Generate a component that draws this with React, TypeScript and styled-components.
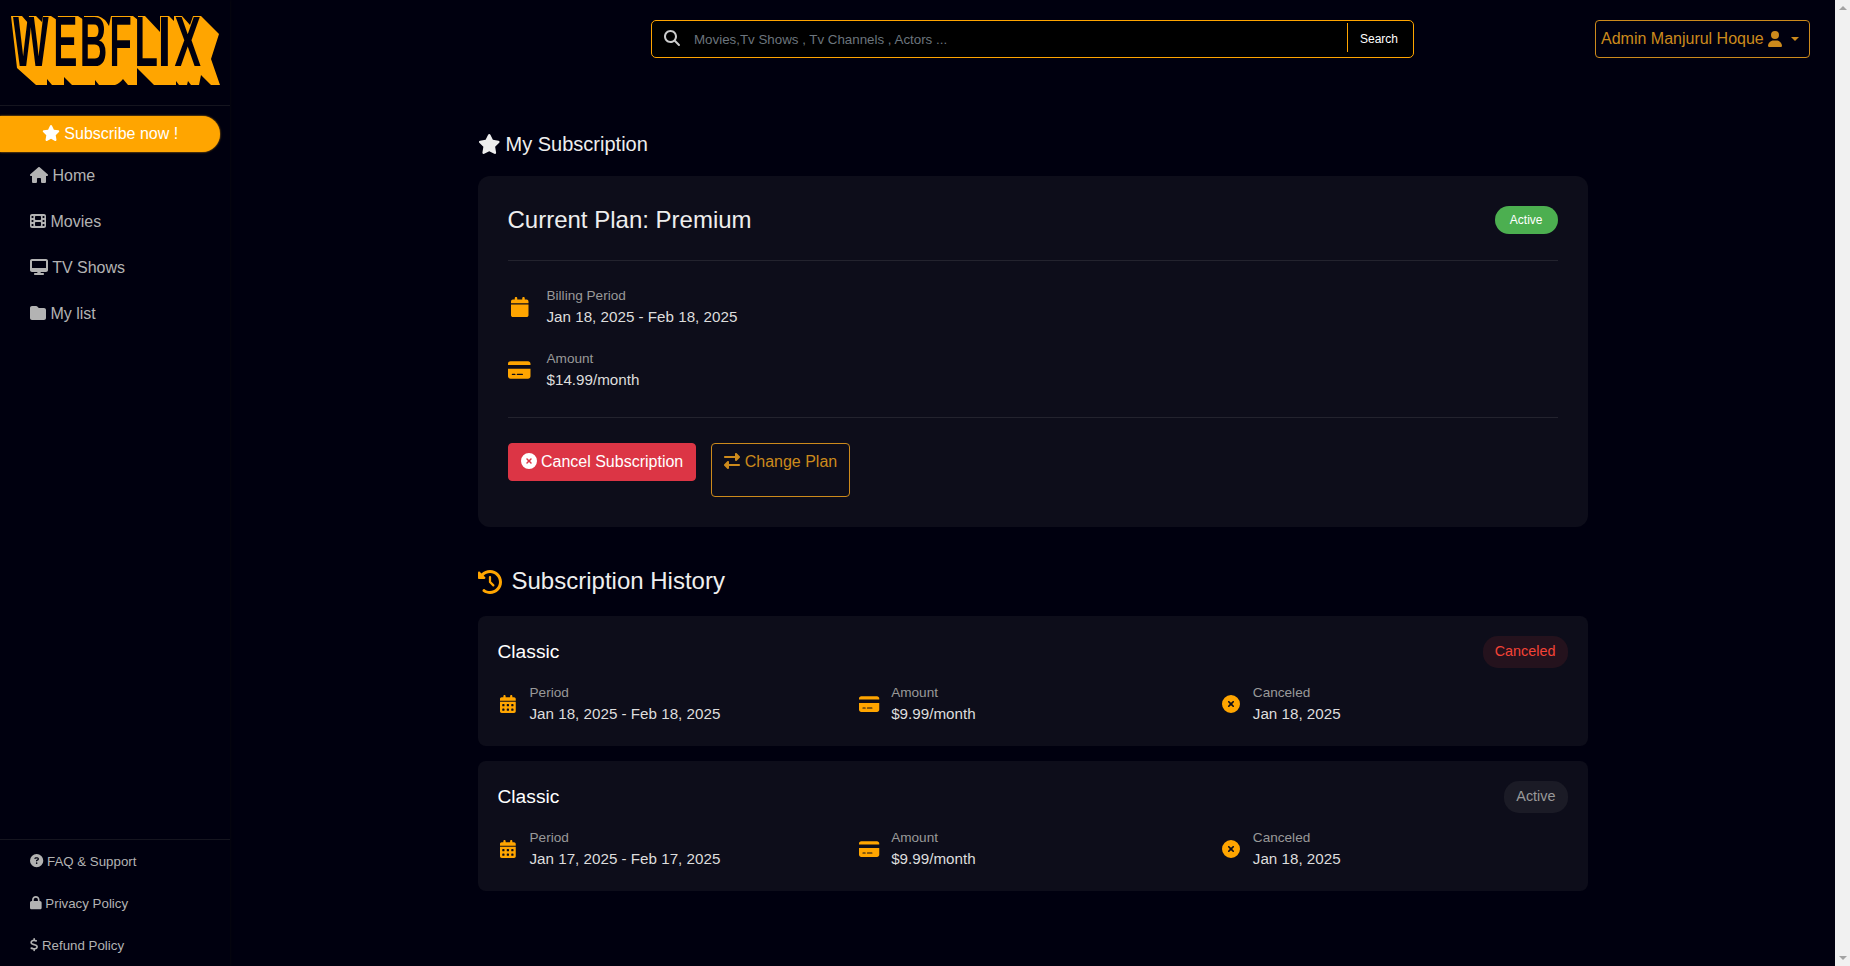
import React from "react";
import styled, { createGlobalStyle, css } from "styled-components";
import type { IconType } from "react-icons";
import {
  FaStar,
  FaHouse,
  FaFilm,
  FaDesktop,
  FaFolder,
  FaCircleQuestion,
  FaLock,
  FaDollarSign,
  FaMagnifyingGlass,
  FaUser,
  FaCalendar,
  FaCalendarDays,
  FaCreditCard,
  FaCircleXmark,
  FaRightLeft,
  FaClockRotateLeft,
} from "react-icons/fa6";

const orange = "#ffa500";

const GlobalStyle = createGlobalStyle`
  *, *::before, *::after { box-sizing: border-box; }
  html, body { margin: 0; padding: 0; overflow: hidden; background: #00000f; }
  body {
    font-family: "Liberation Sans", Arial, sans-serif;
    font-size: 16px;
    line-height: 1.5;
    color: #eee;
  }
`;

const Shell = styled.div`
  display: flex;
  width: 100vw;
  height: 100vh;
  overflow: hidden;
`;

const Sidebar = styled.aside`
  width: 230px;
  flex: none;
  display: flex;
  flex-direction: column;
  box-shadow: 1px 0 2px #06060f;
`;

const LogoArea = styled.div`
  height: 106px;
  flex: none;
  border-bottom: 1px solid #15151f;
`;

const SubscribeButton = styled.a`
  display: block;
  width: 220px;
  height: 36px;
  margin-top: 10px;
  padding-top: 6px;
  flex: none;
  border-radius: 0 18px 18px 0;
  background: ${orange};
  box-shadow: 0 0 2px ${orange};
  color: #fff;
  line-height: 24px;
  text-align: center;
`;

const Nav = styled.nav`
  display: flex;
  flex-direction: column;
`;

const NavLink = styled.a<{ $small?: boolean }>`
  display: block;
  height: ${(p) => (p.$small ? 42 : 46)}px;
  padding: 12px 30px 0;
  font-size: ${(p) => (p.$small ? 13.3 : 16)}px;
  line-height: ${(p) => (p.$small ? 20 : 24)}px;
  color: #b3b3b3;
  white-space: nowrap;
`;

const SidebarFooter = styled.div`
  margin-top: auto;
  height: 127px;
  flex: none;
  border-top: 1px solid #15151f;
`;

const Content = styled.div`
  flex: 1;
  min-width: 0;
  display: flex;
  flex-direction: column;
`;

const TopBar = styled.header`
  display: grid;
  grid-template-columns: 421px 763px 1fr;
  padding: 20px 25px 0 0;
  height: 58px;
  flex: none;
`;

const SearchBox = styled.div`
  grid-column: 2;
  display: flex;
  height: 38px;
  border: 1px solid ${orange};
  border-radius: 5px;
  background: #000;
  padding: 2px 0 0 12px;
`;

const SearchIcon = styled.span`
  width: 30px;
  font-size: 16px;
  padding-top: 4px;
  color: #ccc;
`;

const Placeholder = styled.span`
  flex: 1;
  font-size: 13.33px;
  line-height: 33px;
  color: #6c757d;
`;

const SearchButton = styled.span`
  width: 66px;
  height: 29px;
  border-left: 1px solid ${orange};
  padding-left: 12px;
  font-size: 12px;
  line-height: 33px;
  color: #fff;
`;

const UserButton = styled.div`
  justify-self: end;
  width: 215px;
  height: 38px;
  display: flex;
  align-items: center;
  border: 1px solid #cc8a1c;
  border-radius: 4px;
  padding-left: 5px;
  color: #cc8a1c;
  white-space: pre;
`;

const Caret = styled.span`
  margin-left: 9px;
  border-top: 4px solid currentColor;
  border-left: 4px solid transparent;
  border-right: 4px solid transparent;
`;

const Page = styled.main`
  width: 1110px;
  margin: 71px auto 0;
`;

const PageTitle = styled.h1`
  margin: 0;
  height: 47px;
  font-size: 20px;
  font-weight: 400;
  line-height: 30px;
`;

const Panel = styled.section`
  height: 351px;
  padding: 30px;
  border-radius: 12px;
  background: #0d0d1a;
`;

const PanelHead = styled.div`
  display: flex;
  justify-content: space-between;
  height: 55px;
  border-bottom: 1px solid #23232e;
`;

const PlanName = styled.h2`
  margin: 0;
  font-size: 24px;
  font-weight: 400;
  line-height: 28px;
`;

const ActivePill = styled.span`
  height: 28px;
  padding: 0 15px;
  border-radius: 15px;
  background: #4caf50;
  color: #fff;
  font-size: 12px;
  line-height: 28px;
`;

const PanelBody = styled.div`
  display: flex;
  flex-direction: column;
  gap: 20px;
  height: 157px;
  padding-top: 25px;
  border-bottom: 1px solid #23232e;
`;

const Detail = styled.div<{ $compact?: boolean }>`
  display: flex;
  align-items: center;
  gap: ${(p) => (p.$compact ? 12 : 15)}px;
  height: 43px;
  font-size: 15.2px;
  line-height: 22.8px;
  color: #ddd;
`;

const IconSlot = styled.span<{ $compact?: boolean }>`
  display: flex;
  justify-content: center;
  width: ${(p) => (p.$compact ? 20 : 24)}px;
  margin-bottom: ${(p) => (p.$compact ? 1 : 2)}px;
  font-size: ${(p) => (p.$compact ? 18 : 20)}px;
  color: ${orange};
`;

const Caption = styled.div`
  font-size: 13.6px;
  line-height: 20.4px;
  color: #999;
`;

const Actions = styled.div`
  display: flex;
  align-items: flex-start;
  gap: 15px;
  padding-top: 25px;
`;

const ActionButton = styled.button<{ $outline?: boolean }>`
  height: 38px;
  padding: 6px 12px;
  border: 1px solid #dc3545;
  border-radius: 4px;
  background: #dc3545;
  color: #fff;
  font: 16px/24px "Liberation Sans", Arial, sans-serif;
  display: block;
  ${(p) =>
    p.$outline &&
    css`
      height: 54px;
      padding-bottom: 22px;
      border-color: #cc8a1c;
      background: transparent;
      color: #cc8a1c;
    `}
`;

const HistoryTitle = styled.h2`
  display: flex;
  align-items: center;
  gap: 10px;
  margin: 37px 0 16px;
  height: 36px;
  font-size: 24px;
  font-weight: 400;
  svg { color: ${orange}; }
`;

const HistoryTitleText = styled.span`
  padding-bottom: 2px;
`;

const HistoryCard = styled.article`
  height: 130px;
  margin-bottom: 15px;
  padding: 20px;
  border-radius: 8px;
  background: #0d0d1a;
`;

const HistoryHead = styled.div`
  display: flex;
  justify-content: space-between;
  align-items: center;
  height: 32px;
  margin-bottom: 15px;
`;

const HistoryName = styled.h3`
  margin: 0;
  font-size: 19.2px;
  font-weight: 400;
  line-height: 28px;
  color: #fff;
`;

const StatusPill = styled.span<{ $canceled?: boolean }>`
  padding: 5px 12px;
  border-radius: 15px;
  font-size: 14.4px;
  line-height: 21.6px;
  background: ${(p) => (p.$canceled ? "rgba(244,67,54,.1)" : "#1b1b26")};
  color: ${(p) => (p.$canceled ? "#f44336" : "#999")};
`;

const HistoryGrid = styled.div`
  display: grid;
  grid-template-columns: repeat(3, 1fr);
  gap: 15px;
`;

const ScrollTrack = styled.div`
  width: 15px;
  flex: none;
  display: flex;
  flex-direction: column;
  justify-content: space-between;
  align-items: center;
  padding: 6px 0;
  background: #f1f1f1;
`;

const ScrollArrow = styled.span<{ $down?: boolean }>`
  border-left: 4px solid transparent;
  border-right: 4px solid transparent;
  ${(p) => (p.$down ? "border-top" : "border-bottom")}: 4px solid #a3a3a3;
`;

// letter, left edge, horizontal squeeze
const letters: [string, number, number][] = [
  ["W", 13.1, 0.543],
  ["E", 53.6, 0.514],
  ["B", 79.7, 0.548],
  ["F", 109.5, 0.524],
  ["L", 134.4, 0.552],
  ["I", 157.8, 0.69],
  ["X", 174.4, 0.57],
];

function Logo() {
  return (
    <svg width="230" height="100" viewBox="0 0 230 100" role="img" aria-label="WEBFLIX">
      <path
        fill={orange}
        d="M11 16H22L28 23L29 16H36L42 22L43 16H51L57 20L58 16H78L84 20V16H98Q105 18 109 26L111 16H133L138 20V16H145L160 32V16H169L174 21V16H182L190 25L193 16H201L202 17L219 34L211 59L220 85H211L201 75L199 85H191L188 81L187 85H179L176 81V85H154L137 68V85H128L123 79Q119 84 115 85H99L95 80V85H72L64 77V85H52L47 79V85H36L17 68Z"
      />
      {letters.map(([ch, x, squeeze]) => (
        <text
          key={ch}
          transform={`translate(${x} 66) scale(${squeeze} 1)`}
          fontFamily="Liberation Sans"
          fontWeight={700}
          fontSize={69.5}
          fill="#00000f"
        >
          {ch}
        </text>
      ))}
    </svg>
  );
}

const Glyph = styled.span<{ $ratio: number }>`
  display: contents;
  svg {
    width: ${(p) => p.$ratio}em;
    height: 1em;
    flex: none;
    vertical-align: -0.125em;
    overflow: visible;
  }
`;

const wideIcons: IconType[] = [FaStar, FaHouse, FaDesktop, FaCreditCard];
const narrowIcons: IconType[] = [FaLock, FaUser, FaCalendar, FaCalendarDays];

function ratioOf(icon: IconType) {
  if (wideIcons.includes(icon)) return 1.125;
  if (narrowIcons.includes(icon)) return 0.875;
  return icon === FaDollarSign ? 0.625 : 1;
}

function Fa({ icon: Icon }: { icon: IconType }) {
  return (
    <Glyph $ratio={ratioOf(Icon)}>
      <Icon />
    </Glyph>
  );
}

function DetailItem(props: { icon: IconType; label: string; value: string; compact?: boolean }) {
  return (
    <Detail $compact={props.compact}>
      <IconSlot $compact={props.compact}>
        <Fa icon={props.icon} />
      </IconSlot>
      <div>
        <Caption>{props.label}</Caption>
        {props.value}
      </div>
    </Detail>
  );
}

const mainLinks: [IconType, string][] = [
  [FaHouse, "Home"],
  [FaFilm, "Movies"],
  [FaDesktop, "TV Shows"],
  [FaFolder, "My list"],
];

const footerLinks: [IconType, string][] = [
  [FaCircleQuestion, "FAQ & Support"],
  [FaLock, "Privacy Policy"],
  [FaDollarSign, "Refund Policy"],
];

const history = [
  { period: "Jan 18, 2025 - Feb 18, 2025", canceled: true },
  { period: "Jan 17, 2025 - Feb 17, 2025", canceled: false },
];

export default function App() {
  return (
    <>
      <GlobalStyle />
      <Shell>
        <Sidebar>
          <LogoArea>
            <Logo />
          </LogoArea>
          <SubscribeButton>
            <Fa icon={FaStar} /> Subscribe now !
          </SubscribeButton>
          <Nav>
            {mainLinks.map(([icon, label]) => (
              <NavLink key={label}>
                <Fa icon={icon} /> {label}
              </NavLink>
            ))}
          </Nav>
          <SidebarFooter>
            {footerLinks.map(([icon, label]) => (
              <NavLink key={label} $small>
                <Fa icon={icon} /> {label}
              </NavLink>
            ))}
          </SidebarFooter>
        </Sidebar>
        <Content>
          <TopBar>
            <SearchBox>
              <SearchIcon>
                <Fa icon={FaMagnifyingGlass} />
              </SearchIcon>
              <Placeholder>Movies,Tv Shows , Tv Channels , Actors ...</Placeholder>
              <SearchButton>Search</SearchButton>
            </SearchBox>
            <UserButton>
              Admin Manjurul Hoque <Fa icon={FaUser} />
              <Caret />
            </UserButton>
          </TopBar>
          <Page>
            <PageTitle>
              <Fa icon={FaStar} /> My Subscription
            </PageTitle>
            <Panel>
              <PanelHead>
                <PlanName>Current Plan: Premium</PlanName>
                <ActivePill>Active</ActivePill>
              </PanelHead>
              <PanelBody>
                <DetailItem icon={FaCalendar} label="Billing Period" value="Jan 18, 2025 - Feb 18, 2025" />
                <DetailItem icon={FaCreditCard} label="Amount" value="$14.99/month" />
              </PanelBody>
              <Actions>
                <ActionButton>
                  <Fa icon={FaCircleXmark} /> Cancel Subscription
                </ActionButton>
                <ActionButton $outline>
                  <Fa icon={FaRightLeft} /> Change Plan
                </ActionButton>
              </Actions>
            </Panel>
            <HistoryTitle>
              <Fa icon={FaClockRotateLeft} />
              <HistoryTitleText>Subscription History</HistoryTitleText>
            </HistoryTitle>
            {history.map((entry) => (
              <HistoryCard key={entry.period}>
                <HistoryHead>
                  <HistoryName>Classic</HistoryName>
                  <StatusPill $canceled={entry.canceled}>{entry.canceled ? "Canceled" : "Active"}</StatusPill>
                </HistoryHead>
                <HistoryGrid>
                  <DetailItem compact icon={FaCalendarDays} label="Period" value={entry.period} />
                  <DetailItem compact icon={FaCreditCard} label="Amount" value="$9.99/month" />
                  <DetailItem compact icon={FaCircleXmark} label="Canceled" value="Jan 18, 2025" />
                </HistoryGrid>
              </HistoryCard>
            ))}
          </Page>
        </Content>
        <ScrollTrack>
          <ScrollArrow />
          <ScrollArrow $down />
        </ScrollTrack>
      </Shell>
    </>
  );
}
